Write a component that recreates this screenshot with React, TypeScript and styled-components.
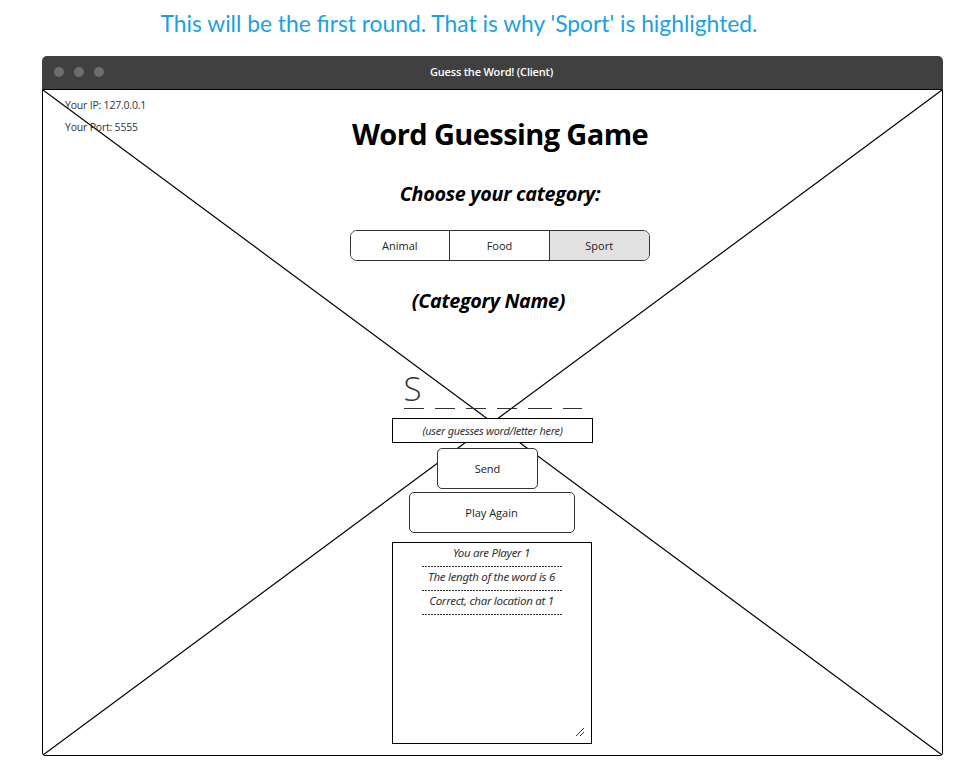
import * as React from "react";
import styled, { createGlobalStyle } from "styled-components";

const GlobalStyle = createGlobalStyle`
  html, body {
    margin: 0;
    padding: 0;
    background: #ffffff;
  }
  body {
    font-family: "Lato", "Noto Sans", sans-serif;
    color: #000;
  }
`;

const Page = styled.div`
  width: 955px;
  height: 776px;
  display: flex;
  flex-direction: column;
  overflow: hidden;
`;

const Caption = styled.div`
  height: 56px;
  box-sizing: border-box;
  padding: 9px 0 0 0;
  width: 918px;
  text-align: center;
  font-family: "Lato", sans-serif;
  font-size: 22.8px;
  color: #1ba1e2;
  line-height: 28px;
`;

const Window = styled.div`
  margin-left: 42px;
  width: 901px;
  display: flex;
  flex-direction: column;
`;

const TitleBar = styled.div`
  height: 33px;
  background: #404040;
  border-radius: 5px 5px 0 0;
  display: flex;
  align-items: center;
  padding: 0 12px;
`;

const Dots = styled.div`
  display: flex;
  gap: 10px;
  padding-bottom: 2px;
`;

const Dot = styled.span`
  width: 10px;
  height: 10px;
  border-radius: 50%;
  background: #6e6e6e;
`;

const TitleText = styled.div`
  flex: 1;
  text-align: center;
  margin-right: 52px;
  padding-bottom: 2px;
  color: #ffffff;
  font-family: "Open Sans", sans-serif;
  font-weight: 600;
  font-size: 11px;
  letter-spacing: -0.2px;
`;

const Body = styled.div`
  position: relative;
  height: 667px;
  box-sizing: border-box;
  border: 1.5px solid #000;
  border-radius: 0 0 3px 3px;
  background: #fff;
  display: grid;
`;

const Cross = styled.svg`
  position: absolute;
  inset: 0;
  width: 100%;
  height: 100%;
`;

const Info = styled.div`
  grid-area: 1 / 1;
  position: relative;
  padding: 8px 0 0 22px;
  display: flex;
  flex-direction: column;
  gap: 7px;
  font-family: "Open Sans", sans-serif;
  font-size: 10.5px;
  color: #333;
  line-height: 15px;
  letter-spacing: -0.2px;
`;

const Main = styled.div`
  grid-area: 1 / 1;
  position: relative;
  display: flex;
  flex-direction: column;
  align-items: center;
`;

const Heading = styled.h1`
  margin: 24px 0 0 15px;
  font-family: "Open Sans", sans-serif;
  font-weight: 700;
  font-size: 29px;
  line-height: 40px;
  letter-spacing: -0.6px;
`;

const SubHeading = styled.h2<{ $shift?: number; $top: number }>`
  margin: ${(p) => p.$top}px 0 0 ${(p) => p.$shift ?? 0}px;
  font-family: "Open Sans", sans-serif;
  font-style: italic;
  font-weight: 700;
  font-size: 19.8px;
  line-height: 26px;
  letter-spacing: -0.3px;
`;

const Segmented = styled.div`
  margin: 23px 0 0 14px;
  display: flex;
  width: 300px;
  height: 31px;
  box-sizing: border-box;
  border: 1px solid #333;
  border-radius: 7px;
  overflow: hidden;
`;

const Segment = styled.div<{ $active?: boolean }>`
  flex: 1;
  display: flex;
  align-items: center;
  justify-content: center;
  padding-bottom: 1px;
  font-family: "Open Sans", sans-serif;
  font-size: 11px;
  color: #222;
  background: ${(p) => (p.$active ? "#e1e1e1" : "#fff")};
  & + & {
    border-left: 1px solid #333;
  }
`;

const WordRow = styled.div`
  margin: 63px 0 0 0;
  display: flex;
  gap: 11px;
  height: 32px;
`;

const Slot = styled.div<{ $w: number }>`
  width: ${(p) => p.$w}px;
  height: 32px;
  box-sizing: border-box;
  border-bottom: 1px solid #333;
  display: flex;
  align-items: flex-end;
  justify-content: flex-start;
  font-family: "Open Sans", sans-serif;
  font-weight: 300;
  font-size: 33px;
  line-height: 34px;
  color: #333;
  padding-bottom: 2px;
`;

const GuessInput = styled.div`
  margin: 9px 0 0 0;
  width: 201px;
  height: 25px;
  box-sizing: border-box;
  border: 1px solid #000;
  background: #fff;
  display: flex;
  align-items: center;
  justify-content: center;
  font-family: "Noto Sans", sans-serif;
  font-style: italic;
  font-size: 11px;
  color: #333;
  letter-spacing: -0.3px;
`;

const Button = styled.div<{ $w: number; $top: number; $shift?: number }>`
  margin: ${(p) => p.$top}px 0 0 ${(p) => p.$shift ?? 0}px;
  width: ${(p) => p.$w}px;
  height: 41px;
  box-sizing: border-box;
  border: 1px solid #333;
  border-radius: 5px;
  background: #fff;
  display: flex;
  align-items: center;
  justify-content: center;
  font-family: "Open Sans", sans-serif;
  font-size: 11px;
  color: #222;
`;

const Log = styled.div`
  margin: 9px 0 0 -2px;
  width: 200px;
  height: 202px;
  box-sizing: border-box;
  border: 1px solid #000;
  background: #fff;
  position: relative;
  display: flex;
  flex-direction: column;
  align-items: center;
  padding-top: 0;
`;

const LogLine = styled.div`
  width: 140px;
  text-align: center;
  font-family: "Noto Sans", sans-serif;
  font-style: italic;
  font-size: 11.5px;
  line-height: 20px;
  color: #333;
  letter-spacing: -0.3px;
  padding-bottom: 4px;
  background-image: repeating-linear-gradient(
    to right,
    #333 0 2px,
    transparent 2px 3px
  );
  background-size: 100% 1px;
  background-repeat: no-repeat;
  background-position: bottom;
`;

const Grip = styled.svg`
  position: absolute;
  right: 6px;
  bottom: 6px;
  width: 11px;
  height: 11px;
`;

const slots: { ch: string; w: number }[] = [
  { ch: "S", w: 20 },
  { ch: "", w: 20 },
  { ch: "", w: 20 },
  { ch: "", w: 20 },
  { ch: "", w: 24 },
  { ch: "", w: 19 },
];

const log = [
  "You are Player 1",
  "The length of the word is 6",
  "Correct, char location at 1",
];

export default function App() {
  return (
    <>
      <GlobalStyle />
      <Page>
        <Caption>This will be the first round. That is why 'Sport' is highlighted.</Caption>
        <Window>
          <TitleBar>
            <Dots>
              <Dot />
              <Dot />
              <Dot />
            </Dots>
            <TitleText>Guess the Word! (Client)</TitleText>
          </TitleBar>
          <Body>
            <Cross viewBox="0 0 898 664" preserveAspectRatio="none">
              <line x1="0" y1="0" x2="898" y2="664" stroke="#000" strokeWidth="1.2" />
              <line x1="898" y1="0" x2="0" y2="664" stroke="#000" strokeWidth="1.2" />
            </Cross>
            <Info>
              <span>Your IP: 127.0.0.1</span>
              <span>Your Port: 5555</span>
            </Info>
            <Main>
              <Heading>Word Guessing Game</Heading>
              <SubHeading $top={27} $shift={15}>Choose your category:</SubHeading>
              <Segmented>
                <Segment>Animal</Segment>
                <Segment>Food</Segment>
                <Segment $active>Sport</Segment>
              </Segmented>
              <SubHeading $top={27} $shift={-8}>(Category Name)</SubHeading>
              <WordRow>
                {slots.map((s, i) => (
                  <Slot key={i} $w={s.w}>{s.ch}</Slot>
                ))}
              </WordRow>
              <GuessInput>(user guesses word/letter here)</GuessInput>
              <Button $w={101} $top={5} $shift={-10}>Send</Button>
              <Button $w={166} $top={3} $shift={-2}>Play Again</Button>
              <Log>
                {log.map((l) => (
                  <LogLine key={l}>{l}</LogLine>
                ))}
                <Grip viewBox="0 0 11 11">
                  <line x1="2" y1="10" x2="10" y2="2" stroke="#333" strokeWidth="1" />
                  <line x1="6" y1="10" x2="10" y2="6" stroke="#333" strokeWidth="1" />
                </Grip>
              </Log>
            </Main>
          </Body>
        </Window>
      </Page>
    </>
  );
}
